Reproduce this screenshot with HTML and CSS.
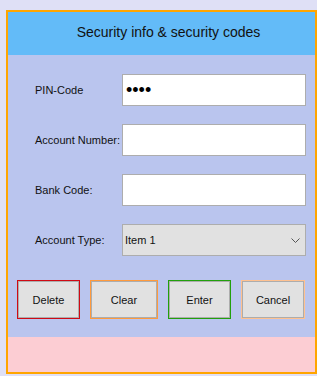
FILE: index.html
```html
<!DOCTYPE html>
<html lang="en">
<head>
    <meta charset="UTF-8">
    <title>Security info &amp; security codes</title>
    <link rel="stylesheet" href="styles.css">
</head>
<body>
    <div class="frame">
        <div class="frame-header">Security info &amp; security codes</div>
        <div class="frame-main">
            <div class="form-row">
                <label class="form-label" for="pin">PIN-Code</label>
                <input class="form-input" id="pin" type="password" value="1234">
            </div>
            <div class="form-row">
                <label class="form-label" for="account">Account Number:</label>
                <input class="form-input" id="account" type="text">
            </div>
            <div class="form-row">
                <label class="form-label" for="bank">Bank Code:</label>
                <input class="form-input" id="bank" type="text">
            </div>
            <div class="form-row">
                <label class="form-label" for="type">Account Type:</label>
                <div class="form-select">
                    <select id="type">
                        <option>Item 1</option>
                        <option>Item 2</option>
                    </select>
                    <svg class="form-select-arrow" width="9" height="5" viewBox="0 0 9 5">
                        <path d="M0.5 0.5 L4.5 4.5 L8.5 0.5" fill="none" stroke="#555" stroke-width="1"/>
                    </svg>
                </div>
            </div>
            <nav class="btn-group">
                <button class="btn btn-delete">Delete</button>
                <button class="btn btn-clear">Clear</button>
                <button class="btn btn-enter">Enter</button>
                <button class="btn btn-cancel">Cancel</button>
            </nav>
        </div>
        <div class="frame-footer"></div>
    </div>
</body>
</html>
```

FILE: styles.css
```css
html,
body {
    margin: 0;
    height: 100%;
}
body {
    background-color: #dfe0f6;
    font-family: "Liberation Sans", Arial, sans-serif;
    color: #000;
    overflow: hidden;
}
.frame {
    margin: 10px 0 0 6px;
    width: 311px;
    height: 364px;
    box-sizing: border-box;
    border: 2px solid #ffa500;
    display: flex;
    flex-direction: column;
}
.frame-header {
    height: 43px;
    background-color: #63bbf8;
    display: flex;
    align-items: center;
    justify-content: center;
    padding: 0 0 4px 14px;
    box-sizing: border-box;
    font-size: 14px;
    color: #111;
}
.frame-main {
    background-color: #bac5ee;
    padding: 19px 0 18px 9px;
    display: flex;
    flex-direction: column;
    gap: 18px;
}
.frame-footer {
    flex: 1;
    background-color: #fccdd3;
}
.form-row {
    display: flex;
    align-items: center;
    height: 32px;
}
.form-label {
    flex: none;
    width: 87px;
    padding-left: 18px;
    font-size: 11px;
    color: #111;
}
.form-input,
.form-select select {
    width: 184px;
    height: 32px;
    box-sizing: border-box;
    border: 1px solid #adadad;
    background-color: #fff;
    margin: 0;
    outline: none;
    font-family: inherit;
}
.form-input[type=password] {
    padding: 0 0 0 3px;
    font-size: 18px;
    letter-spacing: 0;
}
.form-select {
    position: relative;
}
.form-select select {
    -webkit-appearance: none;
    appearance: none;
    background-color: #e1e1e1;
    border-radius: 0;
    padding-left: 2px;
    font-size: 11px;
    color: #111;
}
.form-select-arrow {
    position: absolute;
    right: 6px;
    top: 14px;
}
.btn-group {
    display: flex;
    gap: 10px;
    margin-top: 6px;
}
.btn {
    height: 39px;
    width: 63px;
    margin: 0;
    padding: 0;
    border: 1px solid;
    box-shadow: inset 0 0 0 1px #adadad;
    background-color: #e1e1e1;
    font-family: inherit;
    font-size: 11px;
    color: #111;
}
.btn-delete {
    border-color: #d00a14;
}
.btn-clear {
    width: 68px;
    border-color: #ff9a3c;
}
.btn-enter {
    border-color: #22a00c;
}
.btn-cancel {
    width: 64px;
    border-color: #ffc190;
}
```
